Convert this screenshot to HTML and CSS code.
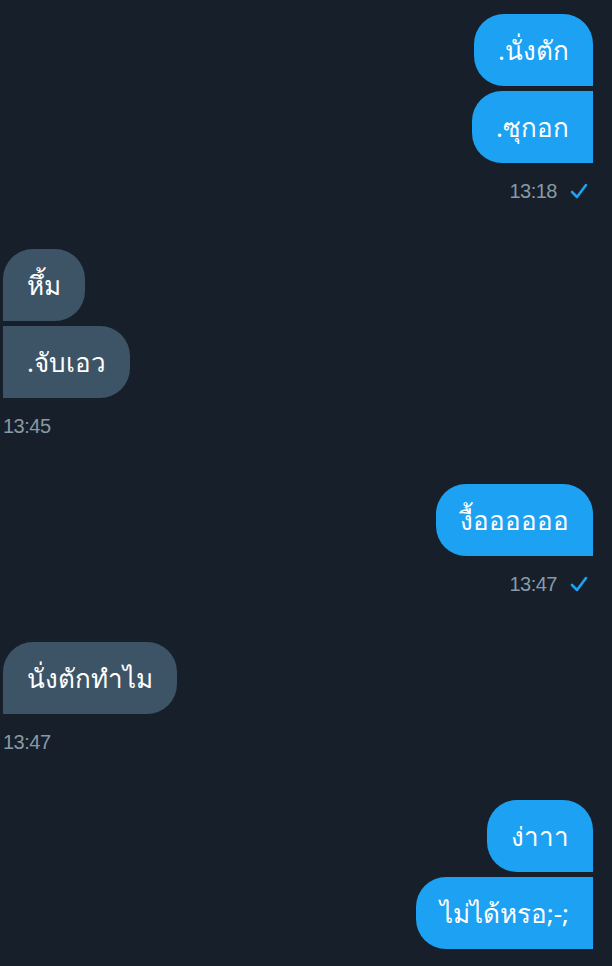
FILE: index.html
```html
<!DOCTYPE html>
<html lang="th">
<head>
<meta charset="utf-8">
<link rel="stylesheet" href="styles.css">
</head>
<body>
<div class="chat">
  <div class="group out">
    <div class="bubble first">.นั่งตัก</div>
    <div class="bubble last">.ซุกอก</div>
    <div class="meta"><span class="time">13:18</span><svg class="check" viewBox="0 0 20 20" width="20" height="20"><path d="M3 11 L8 16 L17 4" fill="none" stroke="#1da1f2" stroke-width="2.6" stroke-linecap="round" stroke-linejoin="round"/></svg></div>
  </div>
  <div class="group in">
    <div class="bubble first">หึ้ม</div>
    <div class="bubble last">.จับเอว</div>
    <div class="meta"><span class="time">13:45</span></div>
  </div>
  <div class="group out">
    <div class="bubble first">งื้ออออออ</div>
    <div class="meta"><span class="time">13:47</span><svg class="check" viewBox="0 0 20 20" width="20" height="20"><path d="M3 11 L8 16 L17 4" fill="none" stroke="#1da1f2" stroke-width="2.6" stroke-linecap="round" stroke-linejoin="round"/></svg></div>
  </div>
  <div class="group in">
    <div class="bubble first">นั่งตักทำไม</div>
    <div class="meta"><span class="time">13:47</span></div>
  </div>
  <div class="group out">
    <div class="bubble first">ง่าาา</div>
    <div class="bubble last">ไม่ได้หรอ;-;</div>
  </div>
</div>
</body>
</html>
```
FILE: styles.css
```css
html, body {
  margin: 0;
  padding: 0;
  background: #17202a;
  height: 100%;
  overflow: hidden;
}
.chat {
  padding: 14px 19px 0 3px;
  display: flex;
  flex-direction: column;
  font-family: "Noto Sans", "DejaVu Sans", sans-serif;
}
.group {
  display: flex;
  flex-direction: column;
  gap: 5px;
  margin-bottom: 46px;
}
.group.out { align-items: flex-end; }
.group.in { align-items: flex-start; }
.bubble {
  height: 72px;
  box-sizing: border-box;
  padding: 0 24px;
  display: flex;
  align-items: center;
  color: #ffffff;
  font-size: 26px;
  border-radius: 30px;
}
.out .bubble { background: #1da1f2; }
.in .bubble { background: #3d5466; }
.out .bubble.first { border-bottom-right-radius: 0; }
.out .bubble.last { border-top-right-radius: 0; border-bottom-right-radius: 0; }
.in .bubble.first { border-bottom-left-radius: 0; }
.in .bubble.last { border-top-left-radius: 0; border-bottom-left-radius: 0; }
.meta {
  margin-top: 11px;
  height: 24px;
  display: flex;
  align-items: center;
  gap: 12px;
  color: #8899a6;
  font-size: 20px;
  font-family: "Liberation Sans", sans-serif;
}
.out .meta { padding-right: 4px; }
.time { letter-spacing: -0.5px; }
.check { display: block; }
```
